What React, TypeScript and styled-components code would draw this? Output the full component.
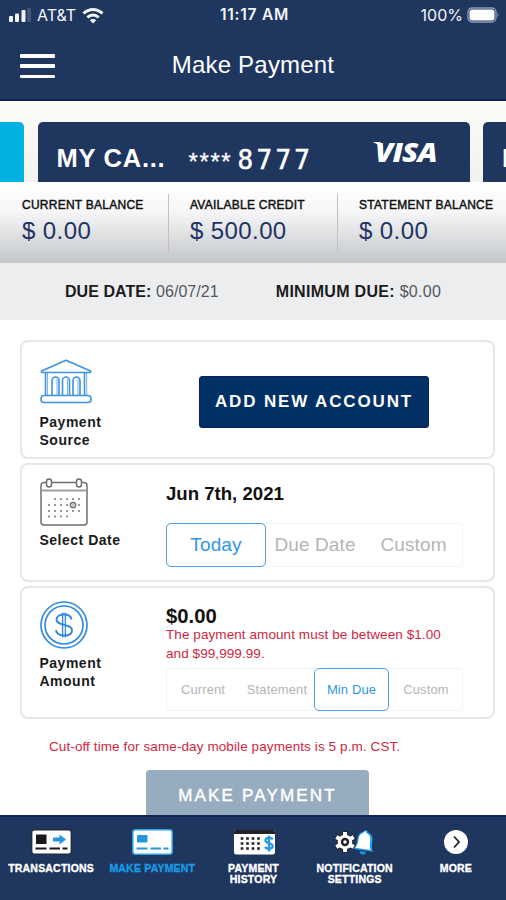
import React from "react";
import styled, { createGlobalStyle, css } from "styled-components";

const Global = createGlobalStyle`
  * { box-sizing: border-box; }
  body { margin: 0; background: #fff; font-family: "Liberation Sans", Arial, sans-serif; }
  button { font-family: inherit; border: 0; padding: 0; margin: 0; background: none; }
`;

const navy = "#1f365f";
const blue = "#2f97e6";

const Screen = styled.div`
  width: 506px;
  height: 900px;
  overflow: hidden;
  display: flex;
  flex-direction: column;
  background: #fff;
  color: #111;
`;

const StatusBar = styled.div`
  height: 30px;
  flex: none;
  display: grid;
  grid-template-columns: 1fr auto 1fr;
  align-items: center;
  padding: 0 6px 0 9px;
  background: ${navy};
  color: #f2f4fa;
  font: 400 16px/30px Inter, sans-serif;
`;

const StatusGroup = styled.div<{ $end?: boolean }>`
  display: flex;
  align-items: center;
  gap: ${(p) => (p.$end ? 4 : 6)}px;
  justify-content: ${(p) => (p.$end ? "flex-end" : "flex-start")};
`;

const Clock = styled.span`
  font-weight: 600;
  font-size: 15.5px;
  letter-spacing: 0.75px;
`;

const Header = styled.header`
  height: 71px;
  flex: none;
  display: grid;
  grid-template-columns: 60px 1fr 60px;
  align-items: center;
  background: ${navy};
  border-bottom: 2px solid #15225a;
`;

const MenuButton = styled.button`
  margin: 3px 0 0 20px;
  width: 35px;
  height: 24px;
  display: flex;
  flex-direction: column;
  justify-content: space-between;
`;

const MenuLine = styled.span`
  display: block;
  height: 3.5px;
  background: #fff;
  border-radius: 1px;
`;

const Title = styled.h1`
  margin: 0;
  text-align: center;
  color: #fff;
  font-size: 24px;
  font-weight: 400;
  letter-spacing: 0.2px;
`;

const Carousel = styled.section`
  height: 81px;
  flex: none;
  display: grid;
  grid-template-columns: 24px 432px 23px;
  column-gap: 13.5px;
  padding-top: 21px;
  background: linear-gradient(#fbfbf8, #f1f3f1);
`;

const CardTile = styled.div<{ $tone: string; $radius: string }>`
  height: 60px;
  background: ${(p) => p.$tone};
  border-radius: ${(p) => p.$radius};
  display: flex;
  align-items: center;
  color: #fff;
  overflow: hidden;
  white-space: nowrap;
`;

const CardName = styled.span`
  margin: 12px 0 0 19px;
  width: 132px;
  flex: none;
  font-size: 25.5px;
  line-height: 28px;
  font-weight: 700;
  letter-spacing: 0.75px;
`;

const CardStars = styled.span`
  font-size: 24px;
  line-height: 28px;
  margin-top: 19px;
  letter-spacing: 1.6px;
  width: 49px;
  -webkit-text-stroke: 0.3px #fff;
`;

const CardDigits = styled.span`
  font-family: "DejaVu Sans Mono", monospace;
  font-size: 26px;
  line-height: 28px;
  letter-spacing: 3.3px;
  margin-top: 16px;
  width: 137px;
  -webkit-text-stroke: 0.5px #fff;
`;

const Visa = styled.span`
  position: relative;
  font: italic 800 27px/28px "Open Sans", sans-serif;
  letter-spacing: -0.8px;
  transform: scaleX(1.1);
  transform-origin: left;
  &::before {
    content: "";
    position: absolute;
    left: -2px;
    top: 4px;
    border-top: 4px solid #fff;
    border-left: 7px solid transparent;
  }
`;

const Balances = styled.section`
  height: 81px;
  flex: none;
  display: grid;
  grid-template-columns: 168px 169px 169px;
  padding-top: 12px;
  background: linear-gradient(#ffffff 0%, #f7f7f8 35%, #c3c6c9 100%);
`;

const Balance = styled.div<{ $divided?: boolean }>`
  height: 58px;
  padding: 4px 0 0 22px;
  white-space: nowrap;
  ${(p) => p.$divided && css`padding-left: 21px; border-left: 1px solid #c0c2c5;`}
`;

const BalanceLabel = styled.div`
  font-size: 12px;
  line-height: 14px;
  font-weight: 400;
  color: #111;
  -webkit-text-stroke: 0.45px #111;
  letter-spacing: 0.25px;
`;

const BalanceValue = styled.div`
  margin-top: 5px;
  font-size: 24px;
  line-height: 28px;
  letter-spacing: 0.4px;
  color: #1f3364;
`;

const DueBar = styled.section`
  height: 57px;
  flex: none;
  display: flex;
  align-items: center;
  gap: 57px;
  padding-left: 65px;
  background: #ecedef;
  font-size: 16px;
  color: #55585c;
  white-space: nowrap;
  b { color: #1b1b1d; }
`;

const DueItem = styled.span<{ $spacing: number }>`
  letter-spacing: ${(p) => p.$spacing}px;
`;

const Body = styled.main`
  flex: 1;
  min-height: 0;
  overflow: hidden;
  padding: 20px 11px 0 20px;
  display: flex;
  flex-direction: column;
  gap: 4px;
`;

const Panel = styled.section<{ $height: number }>`
  height: ${(p) => p.$height}px;
  flex: none;
  display: grid;
  grid-template-columns: 126.5px 1fr;
  border: 2px solid #e7e7e8;
  border-radius: 8px;
  padding-left: 17.5px;
`;

const PanelSide = styled.div<{ $top: number }>`
  padding-top: ${(p) => p.$top}px;
  svg { display: block; }
`;

const PanelLabel = styled.div<{ $gap: number }>`
  margin-top: ${(p) => p.$gap}px;
  font-size: 14px;
  line-height: 17.5px;
  font-weight: 700;
  letter-spacing: 0.5px;
  color: #1a1a1a;
`;

const PanelMain = styled.div<{ $top: number }>`
  padding-top: ${(p) => p.$top}px;
`;

const AddButton = styled.button`
  margin-left: 33px;
  width: 230px;
  height: 52px;
  border-radius: 3px;
  background: #003064;
  border: 1px solid #0b2257;
  color: #fff;
  font-size: 17px;
  font-weight: 700;
  letter-spacing: 1.85px;
`;

const PanelValue = styled.div<{ $size: number }>`
  font-size: ${(p) => p.$size}px;
  line-height: 22px;
  font-weight: 700;
  color: #111;
`;

const ErrorText = styled.p`
  margin: -1px 0 0;
  width: 285px;
  font-size: 13.5px;
  line-height: 18.5px;
  letter-spacing: 0.08px;
  color: #cf2740;
`;

const Segments = styled.div<{ $columns: string; $height: number; $gap: number }>`
  margin-top: ${(p) => p.$gap}px;
  width: 297px;
  height: ${(p) => p.$height}px;
  display: grid;
  grid-template-columns: ${(p) => p.$columns};
  box-shadow: inset 0 0 0 1px #f3f3f3;
  border-radius: 4px;
`;

const Segment = styled.button<{ $active?: boolean; $size: number }>`
  font-size: ${(p) => p.$size}px;
  letter-spacing: 0.12px;
  white-space: nowrap;
  color: ${(p) => (p.$active ? blue : "#b4b5b7")};
  border-radius: 5px;
  ${(p) => p.$active && css`border: 1.5px solid #4ba0e6; background: #fff;`}
`;

const Notice = styled.p`
  margin: 15px 0 0 29px;
  font-size: 13.5px;
  line-height: 18px;
  letter-spacing: 0.1px;
  color: #cf2740;
  white-space: nowrap;
`;

const PayButton = styled.button`
  margin: 10px 0 0 126px;
  flex: none;
  width: 223px;
  height: 52px;
  border-radius: 4px;
  background: #98acc0;
  color: #fff;
  font-size: 17px;
  letter-spacing: 2.15px;
  -webkit-text-stroke: 0.4px #fff;
`;

const TabBar = styled.nav`
  height: 85px;
  flex: none;
  display: grid;
  grid-template-columns: repeat(5, 1fr);
  background: ${navy};
  border-top: 2px solid #15225a;
`;

const Tab = styled.button<{ $active?: boolean }>`
  display: flex;
  flex-direction: column;
  align-items: center;
  padding: 11px 0 0 1px;
  font-size: 10.5px;
  letter-spacing: 0.2px;
  line-height: 11px;
  font-weight: 700;
  white-space: pre-line;
  color: ${(p) => (p.$active ? "#189be6" : "#fff")};
  -webkit-text-stroke: 0.35px currentColor;
`;

const TabIcon = styled.span`
  height: 28px;
  margin-bottom: 7px;
  display: flex;
  align-items: center;
`;

const Signal = () => (
  <svg width="22" height="16" viewBox="0 0 22 16" fill="#f2f4fa">
    <rect x="0" y="9" width="4" height="6" rx="1" />
    <rect x="6" y="6.5" width="4" height="8.5" rx="1" />
    <rect x="12.5" y="3" width="4" height="12" rx="1" />
    <rect x="18.2" y="1" width="3.8" height="14" rx="1" opacity=".18" />
  </svg>
);

const Wifi = () => (
  <svg width="22" height="17" viewBox="0 0 22 17" fill="none" stroke="#f2f4fa" strokeWidth="3">
    <path d="M1.5 6.5C7 1 15 1 20.5 6.5" />
    <path d="M5.3 10.3c3.5-3 7.900-3 11.400 0" />
    <path d="M11 16.500l-3.200-3.300c1.900-1.700 4.500-1.700 6.400 0z" fill="#f2f4fa" stroke="none" />
  </svg>
);

const Battery = () => (
  <svg width="33" height="16" viewBox="0 0 33 16">
    <rect x="1" y="1" width="28" height="14" rx="4" fill="none" stroke="#8f9db8" strokeWidth="1.300" />
    <rect x="2.500" y="2.500" width="25" height="11" rx="2.500" fill="#fff" />
    <path d="M30.500 5.500q2 2.500 0 5z" fill="#8f9db8" />
  </svg>
);

const Bank = () => (
  <svg width="52" height="45" viewBox="0 0 52 45" fill="none" stroke="#3d93e0" strokeWidth="1.600" strokeLinejoin="round">
    <path d="M1.500 13.500v-1.600L26 1.200l24.500 10.700v1.600z" />
    <path d="M5.500 14v22M44.500 14v22" />
    <path d="M7.500 14v22M46.700 14v22" strokeWidth="1" opacity=".7" />
    <path d="M12 36V21.500a3.500 3.500 0 0 1 7 0V36M22.500 36V21.500a3.500 3.500 0 0 1 7 0V36M33 36V21.500a3.500 3.500 0 0 1 7 0V36" strokeWidth="1.600" />
    <path d="M17 36V20M27.500 36V20M38 36V20" strokeWidth="1" opacity=".7" />
    <rect x="1" y="36.500" width="50" height="7" rx="3" />
  </svg>
);

const dots: [number, number][] = [];
[21, 27, 33, 38.5].forEach((y, row) =>
  [9, 15, 21, 27, 33, 39].forEach((x, col) => {
    if ((row === 0 && col === 0) || (row === 3 && col > 3) || (row === 1 && col === 4)) return;
    dots.push([x, y]);
  })
);

const CalendarIcon = () => (
  <svg width="48" height="48" viewBox="0 0 48 48" fill="none" stroke="#6f6f70" strokeWidth="1.500">
    <rect x="1" y="4.500" width="46" height="42.500" rx="3" />
    <path d="M1 12.500h46" strokeWidth="2" stroke="#a0a0a0" />
    <rect x="6.500" y="1" width="5" height="8" rx="2.500" fill="#fff" />
    <rect x="36.500" y="1" width="5" height="8" rx="2.500" fill="#fff" />
    {dots.map(([x, y]) => (
      <circle key={`${x}-${y}`} cx={x} cy={y} r="1" fill="#777" stroke="none" />
    ))}
    <circle cx="33" cy="27" r="2.600" />
    <circle cx="33" cy="27" r=".8" fill="#777" stroke="none" />
  </svg>
);

const DollarCoin = () => (
  <svg width="48" height="48" viewBox="0 0 48 48" fill="none" stroke="#3089df" strokeWidth="1.700">
    <circle cx="24" cy="24" r="23" />
    <circle cx="24" cy="24" r="19" />
    <path d="M31.500 18.500c-.5-3.500-3.500-5-7.500-5s-7.500 1.700-7.500 5c0 7 15.500 3.700 15.500 10.700 0 3.500-3.500 5.300-8 5.300s-7.500-1.800-8-5.300" strokeWidth="2" />
    <path d="M22.600 11.500v25M25.400 11.500v25" strokeWidth="1.300" />
  </svg>
);

const TransferCardIcon = () => (
  <svg width="41" height="26" viewBox="0 0 41 26">
    <rect x=".7" y=".7" width="39.600" height="24.600" rx="2.500" fill="#fff" stroke="#222b3b" strokeWidth="1.400" />
    <rect x="5" y="5.500" width="10.500" height="9.500" fill="#17191d" />
    <path d="M22 8.500h6.500V5.500l6.500 5-6.500 5v-3H22z" fill="#2497df" />
    <path d="M4.500 19.500h11M18.500 19.500H29M31.500 19.500h5" stroke="#17191d" strokeWidth="2" />
  </svg>
);

const CardIcon = () => (
  <svg width="41" height="26" viewBox="0 0 41 26">
    <rect x=".8" y=".8" width="39.400" height="24.400" rx="2.500" fill="#fff" stroke="#2ba3ea" strokeWidth="1.500" />
    <rect x="5" y="6" width="10.500" height="7.500" rx="1" fill="#2497df" />
    <path d="M4.500 19.500h11M18.500 19.500H29M31.500 19.500h5" stroke="#2497df" strokeWidth="2" />
  </svg>
);

const HistoryIcon = () => (
  <svg width="43" height="26" viewBox="-2 0 43 26">
    <rect x="0" y="1" width="41" height="24.500" rx="2.500" fill="#fff" />
    <path d="M0 5V3Q0 1 2 1h37Q41 1 41 3V5z" fill="#222328" />
    {[9.5, 14.5, 19.5].map((y) =>
      [8, 13.5, 19, 24.5].map((x) => <rect key={`${x}-${y}`} x={x - 1.300} y={y - 1.300} width="2.600" height="2.600" fill="#222328" />)
    )}
    <path d="M38.500 10.500c-.5-2-7-2.500-7 1s7.200 2.200 7.200 5.500-6.500 3.500-7.500.8M35 6.500v16" fill="none" stroke="#249be4" strokeWidth="2.300" />
  </svg>
);

const SettingsIcon = () => (
  <svg width="41" height="28" viewBox="0 0 41 28">
    <circle cx="11" cy="14" r="8.600" fill="#24272e" />
    <g stroke="#24272e" strokeWidth="6">
      <path d="M11 3v22M1.500 8.500l19 11M20.500 8.500l-19 11" />
    </g>
    <g stroke="#fff" strokeWidth="4">
      <path d="M11 4v20M2.300 9l17.400 10M19.700 9L2.300 19" />
    </g>
    <circle cx="11" cy="14" r="7.300" fill="#fff" />
    <circle cx="11" cy="14" r="3" fill="#fff" stroke="#202228" strokeWidth="2.400" />
    <g transform="rotate(8 30 14)">
      <path d="M27 23.500a3.200 3.200 0 0 0 6.400 0z" fill="#1d91df" />
      <path d="M30.500 2c1.300 0 2 .8 2 1.900 4.200 1 5.700 4 5.700 8.600 0 4.500.5 6.500 2 10H20.500c2-3.500 2.500-5.500 2.500-10 0-4.600 1.500-7.600 5.500-8.600 0-1.100.7-1.900 2-1.900z" fill="#249cec" />
      <path d="M29.700 3.300c1 0 1.300.7 1.300 1.600 4 .9 5 3.600 5 7.800 0 4 .4 5.500 1.700 8.300H21.900c1.700-2.800 2.200-4.300 2.200-8.300 0-4.200 1.200-6.900 4.300-7.800 0-.9.400-1.600 1.300-1.600z" fill="#fff" />
    </g>
  </svg>
);

const MoreIcon = () => (
  <svg width="26" height="26" viewBox="0 0 26 26">
    <circle cx="13" cy="13" r="12" fill="#fff" />
    <path d="M11 7.500l5 5.500-5 5.500" fill="none" stroke="#20242c" strokeWidth="1.800" />
  </svg>
);

const balances = [
  { label: "CURRENT BALANCE", value: "$ 0.00" },
  { label: "AVAILABLE CREDIT", value: "$ 500.00" },
  { label: "STATEMENT BALANCE", value: "$ 0.00" },
];

const tabs = [
  { label: "TRANSACTIONS", icon: <TransferCardIcon /> },
  { label: "MAKE PAYMENT", icon: <CardIcon />, active: true },
  { label: "PAYMENT\nHISTORY", icon: <HistoryIcon /> },
  { label: "NOTIFICATION\nSETTINGS", icon: <SettingsIcon /> },
  { label: "MORE", icon: <MoreIcon /> },
];

export default function App() {
  return (
    <Screen>
      <Global />
      <StatusBar>
        <StatusGroup>
          <Signal />
          <span>AT&amp;T</span>
          <Wifi />
        </StatusGroup>
        <Clock>11:17 AM</Clock>
        <StatusGroup $end>
          <span>100%</span>
          <Battery />
        </StatusGroup>
      </StatusBar>
      <Header>
        <MenuButton aria-label="Menu">
          <MenuLine />
          <MenuLine />
          <MenuLine />
        </MenuButton>
        <Title>Make Payment</Title>
      </Header>
      <Carousel>
        <CardTile $tone="#00b1e2" $radius="0 5px 0 0" />
        <CardTile $tone={navy} $radius="5px 5px 0 0">
          <CardName>MY CA...</CardName>
          <CardStars>****</CardStars>
          <CardDigits>8777</CardDigits>
          <Visa>VISA</Visa>
        </CardTile>
        <CardTile $tone={navy} $radius="5px 0 0 0">
          <CardName>M</CardName>
        </CardTile>
      </Carousel>
      <Balances>
        {balances.map((b, i) => (
          <Balance key={b.label} $divided={i > 0}>
            <BalanceLabel>{b.label}</BalanceLabel>
            <BalanceValue>{b.value}</BalanceValue>
          </Balance>
        ))}
      </Balances>
      <DueBar>
        <DueItem $spacing={0.06}><b>DUE DATE:</b> 06/07/21</DueItem>
        <DueItem $spacing={0.3}><b>MINIMUM DUE:</b> $0.00</DueItem>
      </DueBar>
      <Body>
        <Panel $height={119}>
          <PanelSide $top={17}>
            <Bank />
            <PanelLabel $gap={10}>Payment<br />Source</PanelLabel>
          </PanelSide>
          <PanelMain $top={34}>
            <AddButton>ADD NEW ACCOUNT</AddButton>
          </PanelMain>
        </Panel>
        <Panel $height={119}>
          <PanelSide $top={13}>
            <CalendarIcon />
            <PanelLabel $gap={6}>Select Date</PanelLabel>
          </PanelSide>
          <PanelMain $top={18}>
            <PanelValue $size={18.6}>Jun 7th, 2021</PanelValue>
            <Segments $columns="100px 98px 99px" $height={44} $gap={18}>
              <Segment $active $size={19}>Today</Segment>
              <Segment $size={19}>Due Date</Segment>
              <Segment $size={19}>Custom</Segment>
            </Segments>
          </PanelMain>
        </Panel>
        <Panel $height={133}>
          <PanelSide $top={13}>
            <DollarCoin />
            <PanelLabel $gap={6}>Payment<br />Amount</PanelLabel>
          </PanelSide>
          <PanelMain $top={17}>
            <PanelValue $size={20.3}>$0.00</PanelValue>
            <ErrorText>The payment amount must be between $1.00 and $99,999.99.</ErrorText>
            <Segments $columns="74px 74px 75px 74px" $height={43} $gap={5}>
              <Segment $size={13}>Current</Segment>
              <Segment $size={13}>Statement</Segment>
              <Segment $active $size={13}>Min Due</Segment>
              <Segment $size={13}>Custom</Segment>
            </Segments>
          </PanelMain>
        </Panel>
        <Notice>Cut-off time for same-day mobile payments is 5 p.m. CST.</Notice>
        <PayButton>MAKE PAYMENT</PayButton>
      </Body>
      <TabBar>
        {tabs.map((t) => (
          <Tab key={t.label} $active={t.active}>
            <TabIcon>{t.icon}</TabIcon>
            {t.label}
          </Tab>
        ))}
      </TabBar>
    </Screen>
  );
}
